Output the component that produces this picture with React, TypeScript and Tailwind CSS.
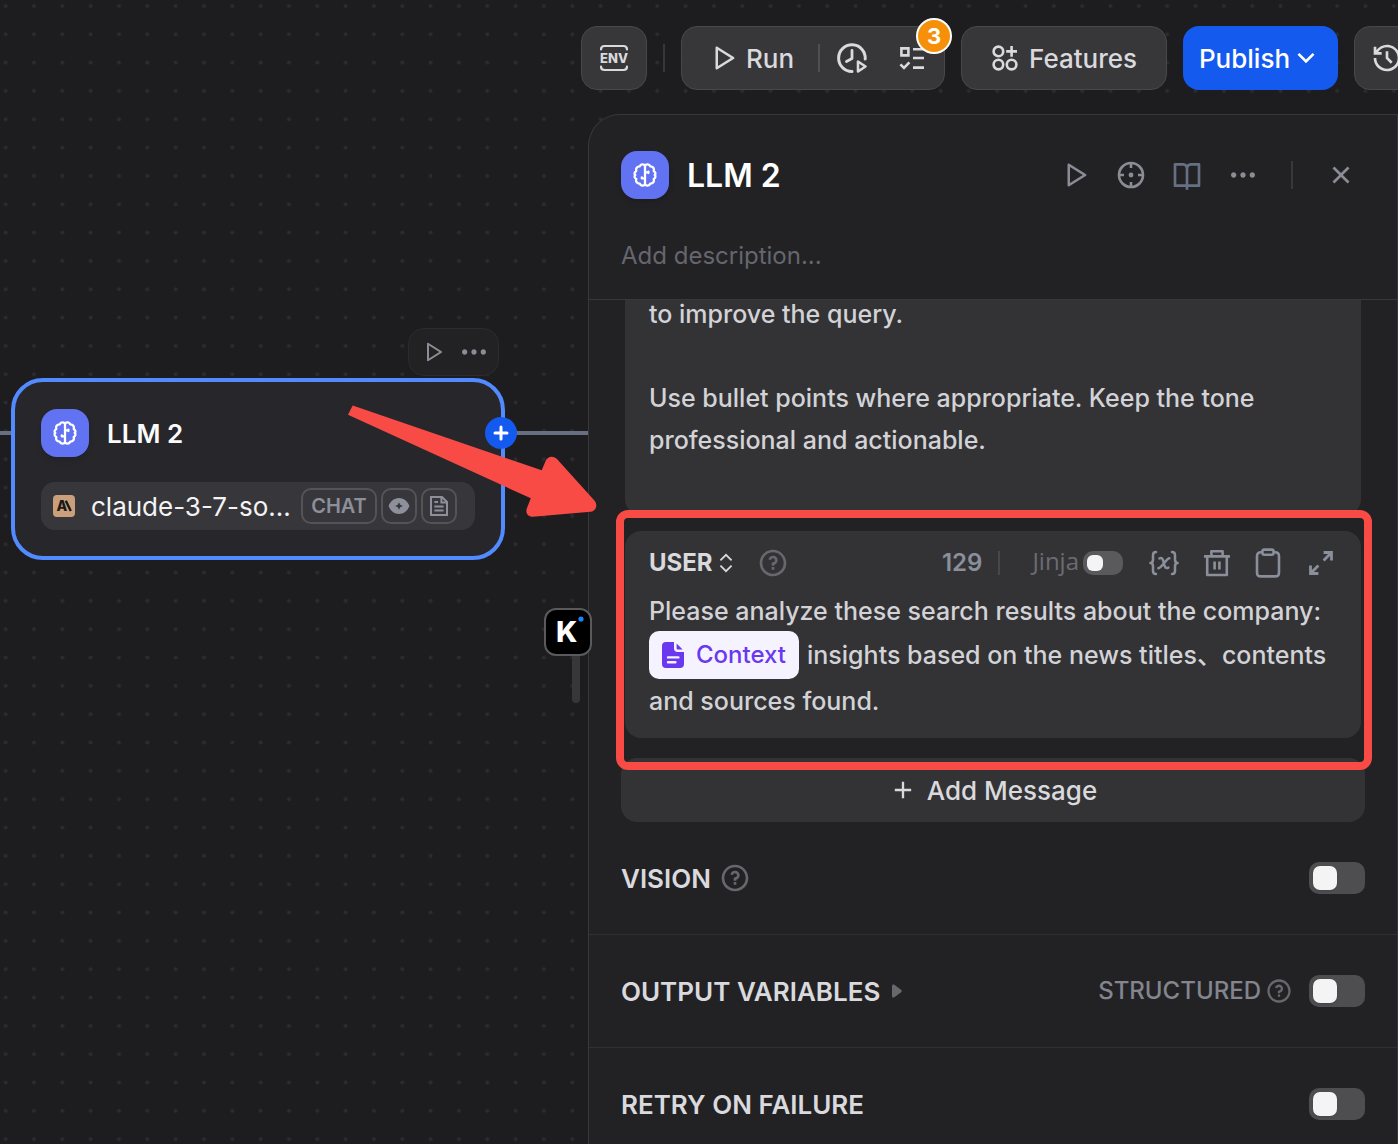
import { useState } from "react"
import type { ReactNode } from "react"
import {
  RiAddLine,
  RiArrowDownSLine,
  RiBookOpenLine,
  RiCloseLine,
  RiHistoryLine,
  RiMoreFill,
  RiPlayLargeLine,
  RiQuestionLine,
} from "react-icons/ri"

type IconProps = { className?: string }

function BrainIcon({ className }: IconProps) {
  const lobe =
    "M12 2.6C11 .9 7.6 1 6.8 3.4C4 3.3 2.4 5.6 3.3 8C1.4 9.2 1 11 2.3 12C1 13 1.4 15 3.3 16C2.4 18.4 4 20.7 6.8 20.6C7.6 23 11 23.1 12 21.4"
  return (
    <svg viewBox="0 0 24 24" className={className} fill="none" stroke="currentColor" strokeWidth="2.3" strokeLinejoin="round" strokeLinecap="round">
      <path d={lobe} />
      <path d={lobe} transform="matrix(-1 0 0 1 24 0)" />
      <path d="M12 2.6V21.4M12 9.4H15.4M15.4 8.6V10M12 15.4H8.8M8.8 14.4V15.4" />
    </svg>
  )
}

function EnvIcon() {
  return (
    <svg viewBox="0 0 30 28" className="h-7 w-[30px]" fill="none" stroke="currentColor" strokeWidth="2.2" strokeLinecap="round">
      <path d="M2 5.5C2 3 3 2 5.5 2H24.5C27 2 28 3 28 5.5M2 22.5C2 25 3 26 5.5 26H24.5C27 26 28 25 28 22.5" />
      <text x="15" y="18.6" textAnchor="middle" fontSize="13" fontWeight="800" fill="currentColor" stroke="none">ENV</text>
    </svg>
  )
}

function ClockPlayIcon() {
  return (
    <svg viewBox="0 0 32 32" className="size-8" fill="none" stroke="currentColor" strokeWidth="3" strokeLinecap="round" strokeLinejoin="round">
      <path d="M16 29.4A13.3 13.3 0 1 1 29.2 17" />
      <path d="M16 8.5V16.5L10.5 19.5" strokeWidth="2.8" />
      <path d="M22 19.5V29.5L29.5 24.5Z" strokeWidth="2.6" />
    </svg>
  )
}

function ChecklistIcon() {
  return (
    <svg viewBox="0 0 28 28" className="size-7" fill="none" stroke="currentColor" strokeWidth="2.6">
      <path d="M3.4 4.4H10.4V11.4H3.4ZM15 5.2H26M15 14H26M15 23.6H26M2.4 20.4L6 24L11.4 18.4" />
    </svg>
  )
}

function FeaturesIcon() {
  return (
    <svg viewBox="0 0 28 28" className="size-7" fill="none" stroke="currentColor" strokeWidth="2.6">
      <circle cx="7.4" cy="7.4" r="4.8" />
      <circle cx="7.4" cy="20.6" r="4.8" />
      <circle cx="20.6" cy="20.6" r="4.8" />
      <path d="M20.6 2V12.8M15.2 7.4H26" />
    </svg>
  )
}

function TargetIcon() {
  return (
    <svg viewBox="0 0 28 28" className="size-7" fill="none" stroke="currentColor" strokeWidth="2.6">
      <circle cx="14" cy="14" r="12" />
      <path d="M14 2V7M14 21V26M2 14H7M21 14H26" />
      <circle cx="14" cy="14" r="2.4" fill="currentColor" stroke="none" />
    </svg>
  )
}

function VariableIcon() {
  return (
    <svg viewBox="0 0 30 26" className="h-[26px] w-[30px]" fill="none" stroke="currentColor" strokeWidth="2.5" strokeLinecap="round" strokeLinejoin="round">
      <path d="M7 2C4.4 2 4 3.4 4 5V9.6C4 11.6 3 13 1.4 13C3 13 4 14.4 4 16.4V21C4 22.6 4.4 24 7 24" />
      <path d="M23 2C25.6 2 26 3.4 26 5V9.6C26 11.6 27 13 28.6 13C27 13 26 14.4 26 16.4V21C26 22.6 25.6 24 23 24" />
      <path d="M10.4 8.4C13 7.4 14 8.8 14.8 13C15.6 17.4 16.8 19 19.4 17.6M20.4 8.2C17.6 8.2 12.6 18 9.4 18.2" />
    </svg>
  )
}

function TrashIcon() {
  return (
    <svg viewBox="0 0 28 28" className="size-7" fill="none" stroke="currentColor" strokeWidth="2.6">
      <path d="M1 7.4H27M4.2 7.4V26H23.8V7.4M8.4 7.4V2.2H19.6V7.4M11.6 12.6V20.6M16.4 12.6V20.6" strokeLinejoin="round" />
    </svg>
  )
}

function ClipboardIcon() {
  return (
    <svg viewBox="0 0 26 30" className="h-[30px] w-[26px]" fill="none" stroke="currentColor" strokeWidth="2.6" strokeLinejoin="round">
      <path d="M7.4 4.2H6C3.4 4.2 2 5.6 2 8.2V24.4C2 27 3.4 28.4 6 28.4H20C22.6 28.4 24 27 24 24.4V8.2C24 5.6 22.6 4.2 20 4.2H18.6" />
      <rect x="7.4" y="1.6" width="11.2" height="5.2" rx="2" />
    </svg>
  )
}

function ExpandIcon() {
  return (
    <svg viewBox="0 0 24 24" className="size-6" fill="none" stroke="currentColor" strokeWidth="2.8">
      <path d="M14.6 1.5H22.5V9.4M22 2L14.6 9.4M9.4 22.5H1.5V14.6M2 22L9.4 14.6" />
    </svg>
  )
}

function UpDownIcon() {
  return (
    <svg viewBox="0 0 14 20" className="h-5 w-3.5" fill="none" stroke="currentColor" strokeWidth="1.8">
      <path d="M1.4 7.4L7 1.8L12.6 7.4M1.4 12.6L7 18.2L12.6 12.6" />
    </svg>
  )
}

function ContextFileIcon() {
  return (
    <svg viewBox="0 0 22 26" className="h-[26px] w-[22px]" fill="currentColor">
      <path d="M4 0H12V6.5C12 8.6 13.4 10 15.5 10H22V22C22 24.6 20.6 26 18 26H4C1.4 26 0 24.6 0 22V4C0 1.4 1.4 0 4 0Z" />
      <path d="M14.6 1.6L20.6 7.6H16C15 7.6 14.6 7 14.6 6.2Z" />
      <path d="M6 15.4H16.4M6 20.2H13.4" stroke="#f5f3ff" strokeWidth="2.4" strokeLinecap="round" />
    </svg>
  )
}

function EyeIcon() {
  return (
    <svg viewBox="0 0 22 18" className="h-[18px] w-[22px]" fill="currentColor">
      <path fillRule="evenodd" d="M11 1C16.4 1 20 5 21.4 9C20 13 16.4 17 11 17C5.6 17 2 13 .6 9C2 5 5.6 1 11 1ZM11 5.2L9.8 7.8L7.2 9L9.8 10.2L11 12.8L12.2 10.2L14.8 9L12.2 7.8Z" />
    </svg>
  )
}

function DocIcon() {
  return (
    <svg viewBox="0 0 20 22" className="h-[22px] w-5" fill="none" stroke="currentColor" strokeWidth="2">
      <path d="M2 2H13L18 7V20H2ZM12.4 2V7.6H18M5.4 7H9M5.4 11.4H14.6M5.4 15.6H14.6" />
    </svg>
  )
}

function NodeBadge() {
  return (
    <span className="flex size-12 shrink-0 items-center justify-center rounded-2xl bg-[#6172f3] text-white shadow-md">
      <BrainIcon className="size-6" />
    </span>
  )
}

function Help() {
  return (
    <button type="button" aria-label="Help" className="text-[#67686f]">
      <RiQuestionLine className="size-8" />
    </button>
  )
}

function Switch({ id, label }: { id: string; label?: string }) {
  const [on, setOn] = useState(false)
  return (
    <input
      id={id}
      type="checkbox"
      role="switch"
      aria-label={label}
      checked={on}
      onChange={(e) => setOn(e.target.checked)}
      className="h-8 w-14 shrink-0 appearance-none rounded-[10px] bg-[#4e4e50] p-1 before:block before:size-6 before:rounded-[7px] before:bg-[#f4f4f5] before:shadow checked:bg-blue-600 checked:before:translate-x-6"
    />
  )
}

function Section({ title, after, children }: { title: string; after?: ReactNode; children: ReactNode }) {
  return (
    <section className="flex h-28 shrink-0 items-center px-8">
      <h3 className="text-[26px] font-semibold text-[#d9d9de]">{title}</h3>
      {after}
      <div className="ml-auto flex items-center">{children}</div>
    </section>
  )
}

function Toolbar() {
  const box = "flex h-16 shrink-0 items-center rounded-2xl border border-[#48484b] bg-[#39393b]/95"
  return (
    <header className="relative flex justify-end gap-4 pt-[26px] pb-6 text-[26px] font-medium text-[#d9d9de]">
      <button type="button" aria-label="Environment" className={`${box} w-[66px] justify-center`}>
        <EnvIcon />
      </button>
      <span className="h-7 w-0.5 shrink-0 self-center bg-[#37373a]" />
      <div className={`${box} relative w-[264px] pl-[26px]`}>
        <button type="button" className="flex items-center gap-2">
          <RiPlayLargeLine className="size-[30px]" />
          Run
        </button>
        <span className="ml-6 h-7 w-0.5 bg-[#505053]" />
        <button type="button" aria-label="Run history" className="ml-4">
          <ClockPlayIcon />
        </button>
        <button type="button" aria-label="Checklist" className="ml-[30px]">
          <ChecklistIcon />
        </button>
        <span className="absolute -top-[9px] -right-2 flex size-9 items-center justify-center rounded-full border-2 border-white bg-[#f79009] text-[22px] font-bold text-white">
          3
        </span>
      </div>
      <button type="button" className={`${box} w-[206px] justify-center gap-2.5`}>
        <FeaturesIcon />
        Features
      </button>
      <button type="button" className="flex h-16 w-[155px] shrink-0 items-center justify-center rounded-2xl bg-[#155aef] text-white">
        Publish
        <RiArrowDownSLine className="size-8" />
      </button>
      <button type="button" aria-label="Version history" className={`${box} -mr-[22px] w-[66px] justify-center`}>
        <RiHistoryLine className="size-8" />
      </button>
    </header>
  )
}

function Canvas() {
  return (
    <div className="absolute inset-0">
      <svg className="absolute size-full" aria-hidden="true">
        <pattern id="dots" x="-8.5" y="-8.2" width="28.33" height="28.33" patternUnits="userSpaceOnUse">
          <circle cx="14.17" cy="14.17" r="2" fill="#2b2b32" />
        </pattern>
        <rect width="100%" height="100%" fill="url(#dots)" />
        <path d="M0 433H12M500 433H600" stroke="#676f83" strokeWidth="4" />
      </svg>

      <article className="absolute top-[378px] left-[11px] h-[182px] w-[494px] rounded-[32px] border-4 border-[#528bff] bg-[#27272b] px-[26px] pt-[27px]">
        <div className="flex items-center gap-[18px]">
          <NodeBadge />
          <h2 className="text-[26px] font-semibold text-[#fbfbfc]">LLM 2</h2>
        </div>
        <div className="mt-[25px] flex h-12 items-center rounded-[14px] bg-[#37373b] pr-[18px] pl-3">
          <svg viewBox="0 0 22 22" className="size-[22px] shrink-0" aria-label="Anthropic">
            <rect width="22" height="22" rx="4" fill="#ca9f7b" />
            <text x="3.6" y="16" fontSize="14" fontWeight="800" fill="#1b1a18">A</text>
            <path d="M12.8 5.8L17.8 16" stroke="#1b1a18" strokeWidth="2.4" />
          </svg>
          <span className="ml-4 text-[26px] text-[#f4f4f5]">claude-3-7-so...</span>
          <span className="ml-auto flex gap-1 text-[#8d8f9a]">
            <span className="flex h-9 w-[76px] items-center justify-center rounded-[10px] border-2 border-[#545458] text-xl font-semibold">CHAT</span>
            <span className="flex size-9 items-center justify-center rounded-[10px] border-2 border-[#545458]"><EyeIcon /></span>
            <span className="flex size-9 items-center justify-center rounded-[10px] border-2 border-[#545458]"><DocIcon /></span>
          </span>
        </div>
      </article>

      <button type="button" aria-label="Add next block" className="absolute top-[417px] left-[485px] flex size-8 items-center justify-center rounded-full bg-[#155aef] text-white">
        <svg viewBox="0 0 16 16" className="size-4" stroke="currentColor" strokeWidth="3" strokeLinecap="round">
          <path d="M8 2V14M2 8H14" />
        </svg>
      </button>

      <div className="absolute top-[328px] left-[408px] flex h-12 w-[91px] items-center justify-between rounded-2xl border border-[#2c2c2f] bg-[#222225] px-2 text-[#8a8c96]">
        <button type="button" aria-label="Run this step" className="pl-1"><RiPlayLargeLine className="size-6" /></button>
        <button type="button" aria-label="More"><RiMoreFill className="size-8" /></button>
      </div>

      <span className="absolute top-[640px] left-[572px] h-[63px] w-2 rounded-full bg-[#37373b]" />
    </div>
  )
}

function PanelHeader() {
  return (
    <div className="shrink-0 border-b border-[#38383b] pt-9 pb-7 pl-8">
      <div className="flex items-center pr-10 text-[#8a8c96]">
        <NodeBadge />
        <h2 className="ml-[18px] pt-0.5 text-[32px] leading-10 font-semibold text-white">LLM 2</h2>
        <div className="ml-auto flex items-center gap-6">
          <button type="button" aria-label="Run this step" className="flex size-8 items-center justify-center"><RiPlayLargeLine className="size-[30px]" /></button>
          <button type="button" aria-label="Locate node" className="flex size-8 items-center justify-center"><TargetIcon /></button>
          <a href="#docs" aria-label="Help document" className="flex size-8 items-center justify-center text-[#667085]"><RiBookOpenLine className="size-8" /></a>
          <button type="button" aria-label="More" className="flex size-8 items-center justify-center"><RiMoreFill className="size-8" /></button>
          <span className="mx-2 h-7 w-0.5 bg-[#38383b]" />
          <button type="button" aria-label="Close" className="flex size-8 items-center justify-center"><RiCloseLine className="size-8" /></button>
        </div>
      </div>
      <input
        aria-label="Description"
        placeholder="Add description..."
        className="mt-10 block h-8 w-full bg-transparent pt-0.5 text-2xl text-[#d9d9de] placeholder:text-[#65666e] focus:outline-none"
      />
    </div>
  )
}

function UserMessage() {
  const [role, setRole] = useState("USER")
  return (
    <div className="mx-9 mt-4 h-[207px] shrink-0 rounded-2xl bg-[#333335] px-6 pt-4">
      <div className="flex h-8 items-center text-[#8a8f9b]">
        <label className="flex items-center gap-1.5 text-[#d9d9de]">
          <select
            aria-label="Message role"
            value={role}
            onChange={(e) => setRole(e.target.value)}
            className="field-sizing-content appearance-none text-2xl font-bold focus:outline-none"
          >
            <option>SYSTEM</option>
            <option>USER</option>
            <option>ASSISTANT</option>
          </select>
          <UpDownIcon />
        </label>
        <span className="ml-6 flex"><Help /></span>
        <span className="ml-auto text-2xl font-semibold">129</span>
        <span className="ml-4 h-6 w-0.5 bg-[#48484b]" />
        <label htmlFor="jinja" className="ml-8 pb-1 font-['Open_Sans',sans-serif] text-2xl leading-6 text-[#6b6c73]">Jinja</label>
        <input
          id="jinja"
          type="checkbox"
          role="switch"
          className="ml-1 h-6 w-10 appearance-none rounded-[10px] bg-[#5a5a5c] p-1 before:block before:size-4 before:rounded-md before:bg-[#f4f4f5] checked:bg-blue-600 checked:before:translate-x-4"
        />
        <div className="ml-[26px] flex items-center gap-6">
          <button type="button" aria-label="Insert variable"><VariableIcon /></button>
          <button type="button" aria-label="Delete"><TrashIcon /></button>
          <button type="button" aria-label="Copy"><ClipboardIcon /></button>
          <button type="button" aria-label="Expand" className="mx-1"><ExpandIcon /></button>
        </div>
      </div>
      <p className="mt-3 flex flex-col text-[25px] leading-10 font-medium whitespace-nowrap text-[#d2d2d7]">
        <span>Please analyze these search results about the company:</span>
        <span className="flex items-center gap-2 pb-0.5">
          <span className="flex h-12 items-center gap-3 rounded-[10px] bg-[#f5f3ff] px-[13px] text-2xl font-medium text-[#6938ef]">
            <ContextFileIcon />
            Context
          </span>
          insights based on the news titles、contents
        </span>
        <span>and sources found.</span>
      </p>
    </div>
  )
}

function Panel() {
  return (
    <aside className="relative ml-auto flex min-h-0 w-[810px] flex-1 flex-col rounded-tl-[32px] border-x border-t border-[#38383b] bg-[#222224]">
      <PanelHeader />
      <div className="flex min-h-0 flex-1 flex-col overflow-hidden">
        <div className="mx-9 h-[215px] shrink-0 rounded-b-2xl bg-[#333335] px-6">
          <p className="-mt-[7px] text-[25px] leading-[42px] font-medium text-[#d2d2d7]">
            to improve the query.
            <br />
            <br />
            Use bullet points where appropriate. Keep the tone
            <br />
            professional and actionable.
          </p>
        </div>
        <UserMessage />
        <button type="button" className="mx-8 mt-5 flex h-16 shrink-0 items-center justify-center gap-2.5 rounded-2xl bg-[#333335] text-[26px] font-medium text-[#d9d9de]">
          <RiAddLine className="size-7" />
          Add Message
        </button>
        <Section title="VISION" after={<span className="ml-2 flex"><Help /></span>}>
          <Switch id="vision" label="Vision" />
        </Section>
        <hr className="border-[#303033]" />
        <Section
          title="OUTPUT VARIABLES"
          after={
            <svg viewBox="0 0 10 14" className="ml-3 h-3.5 w-2.5" fill="#67686f">
              <path d="M0 2C0 .4 1.2 0 2.4 .8L9 5.8C10 6.6 10 7.4 9 8.2L2.4 13.2C1.2 14 0 13.6 0 12Z" />
            </svg>
          }
        >
          <label htmlFor="structured" className="text-2xl font-medium text-[#83858f]">STRUCTURED</label>
          <span className="mr-4 ml-1 flex text-[#67686f]"><RiQuestionLine className="size-7" /></span>
          <Switch id="structured" />
        </Section>
        <hr className="border-[#303033]" />
        <Section title="RETRY ON FAILURE">
          <Switch id="retry" label="Retry on failure" />
        </Section>
      </div>
    </aside>
  )
}

export default function App() {
  return (
    <div className="relative flex h-screen flex-col overflow-hidden bg-[#1d1d1f] font-['Inter','Noto_Sans_CJK_SC',sans-serif]">
      <Canvas />
      <Toolbar />
      <Panel />

      {/* Floating assistant button */}
      <button type="button" aria-label="Assistant" className="absolute top-[608px] left-[544px] size-12 rounded-xl border-2 border-[#5a5a5c] bg-black text-white">
        <svg viewBox="0 0 44 44" className="size-full">
          <text x="10" y="32" fontSize="29" fontWeight="800" fill="currentColor">K</text>
          <circle cx="35" cy="9" r="2.6" fill="#1783ff" />
        </svg>
      </button>

      {/* Callout frame and arrow */}
      <div className="pointer-events-none absolute top-[510px] left-[616px] h-[260px] w-[756px] rounded-xl border-8 border-[#f84b46]" />
      <svg className="pointer-events-none absolute top-0 left-0 h-[600px] w-[620px]" fill="#f84b46" aria-hidden="true">
        <path d="M352.7 405.5L541.7 470.3L545.4 461.4C547.6 455.8 553.6 455.4 557.4 459.4L594.4 500.6C598.4 505.4 595.6 511.4 590.4 511.8L533 516.8C528 517 525 513 527 508L530.8 498.3L348 414.8Z" />
      </svg>
    </div>
  )
}
